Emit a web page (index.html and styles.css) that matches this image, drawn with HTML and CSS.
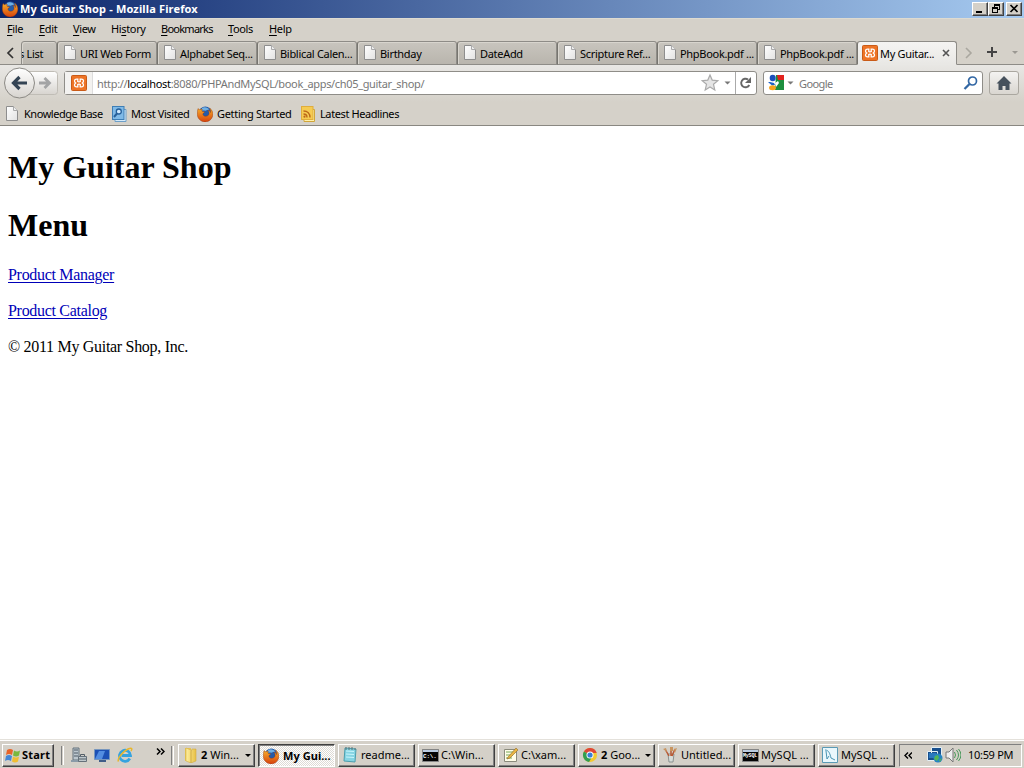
FILE: index.html
```html
<!DOCTYPE html>
<html lang="en">
<head>
<meta charset="utf-8">
<title>My Guitar Shop - Mozilla Firefox</title>
<link rel="stylesheet" href="styles.css">
</head>
<body>
<svg class="sprites" width="0" height="0" aria-hidden="true">
  <defs>
    <linearGradient id="paper" x2="1" y2="1"><stop stop-color="#fff"/><stop offset="1" stop-color="#e2e2e2"/></linearGradient>
    <linearGradient id="flame" x2="0" y2="1"><stop stop-color="#f8b12c"/><stop offset="1" stop-color="#d6420c"/></linearGradient>
    <linearGradient id="folderfill" x2="1"><stop stop-color="#fff0a0"/><stop offset="1" stop-color="#e7bf45"/></linearGradient>
  </defs>
  <symbol id="page" viewBox="0 0 16 16"><path d="M2.500.5h7l4 4v10h-11z" fill="url(#paper)" stroke="#8e8e8e"/><path d="M9.500.5v4h4" fill="#eee" stroke="#aaa"/></symbol>
  <symbol id="firefox" viewBox="0 0 16 16"><circle cx="8.300" cy="7" r="6.500" fill="#255ba8"/><path d="M5 2c2-1.500 6-1 7.500 2-1-.5-2-.5-3 .3-1 1-3-.3-4.500.7z" fill="#6fb0e4"/><path d="M1 2.500c.6.400 1 .8 1.300 1.300C3.300 3 4.500 3 5.400 3.500c-.5.500-.6 1.100-.3 1.800l2.500.5c0 1-1.600 1.300-1.800 2.200C6.300 10.500 9.500 11 11.300 9.300c1.300-1.500 1-3.500-.3-5.300 1.700.7 2.300 1.500 2.600 2.600.1-1.800-.2-3.100-1.100-4.600C15.500 4 16.300 7 15.700 9.700 14.900 13.500 11.600 16 8 15.900 3.700 15.800.4 12.500.3 8.300.2 6.200.5 4.300 1 2.500z" fill="url(#flame)" stroke="#8e310d" stroke-width=".4"/></symbol>
  <symbol id="xampp" viewBox="0 0 16 16"><rect x=".5" y=".5" width="15" height="15" rx="1" fill="#ee7426" stroke="#c95b18"/><path d="M6.800 6.300V4.200H5.500C3 4.200 3 6.800 4.700 8 3 9.200 3 11.800 5.500 11.800h1.300V9.700M9.200 6.300V4.200h1.300c2.500 0 2.500 2.600.8 3.800 1.700 1.200 1.700 3.800-.8 3.800H9.200V9.700M6.300 6.300q1.700 1.200 3.400 0M6.300 9.700q1.700-1.200 3.400 0" fill="none" stroke="#fff" stroke-width="1.300"/></symbol>
  <symbol id="visited" viewBox="0 0 16 16"><path d="M13 3.500h2v12H4v-2" fill="#d5eafa" stroke="#6d9fc8"/><rect x="1.500" y=".5" width="11.500" height="13" fill="#80bae7" stroke="#3e7eb5"/><circle cx="7.800" cy="5.500" r="2.500" fill="#cfeaff" stroke="#265f99" stroke-width="1.300"/><path d="m6 7.500-3 3.500" stroke="#265f99" stroke-width="2"/></symbol>
  <symbol id="feed" viewBox="0 0 16 16"><path d="M13 3.500h1.500v12H4v-2" fill="#fff1ad" stroke="#d2a638"/><rect x="1.500" y=".5" width="11.500" height="13" fill="#f5cb52" stroke="#e0ad3b"/><g fill="none" stroke="#bc6819" stroke-width="1.400"><path d="M3.500 5c4 0 6.500 2.500 6.500 6.500M3.500 8c2.200 0 3.500 1.300 3.500 3.500"/></g><circle cx="4.500" cy="10.700" r="1.100" fill="#bc6819"/></symbol>
  <symbol id="cmd" viewBox="0 0 17 13"><path d="M.5.5h16v12H.5z" fill="#050505" stroke="#848484"/><path d="M1 1h15v2H1z" fill="#bacbe0"/></symbol>
</svg>

<div class="window">
  <header class="titlebar">
    <svg class="i16"><use href="#firefox"/></svg><span class="title">My Guitar Shop - Mozilla Firefox</span>
    <div class="controls">
      <svg class="winbtn" viewBox="0 0 14 12"><path d="M3 8h6v2H3z"/></svg>
      <svg class="winbtn" viewBox="0 0 14 12"><path d="M5 1h6v6H9V6h1V3H6v1H5zM3 4h6v6H3zM4 6v3h4V6z" fill-rule="evenodd"/></svg>
      <svg class="winbtn close" viewBox="0 0 14 12"><path d="m3.500 2 7 7m0-7-7 7" stroke="#000" stroke-width="1.700"/></svg>
    </div>
  </header>

  <nav class="menubar"><span><u>F</u>ile</span><span><u>E</u>dit</span><span><u>V</u>iew</span><span>Hi<u>s</u>tory</span><span><u>B</u>ookmarks</span><span><u>T</u>ools</span><span><u>H</u>elp</span></nav>

  <div class="tabs">
    <svg class="scroll" viewBox="0 0 21 24"><path d="m13 7-5 5 5 5" fill="none" stroke="#333" stroke-width="1.700"/></svg>
    <div class="tab partial"><span>s List</span></div>
    <div class="tab"><svg class="i16"><use href="#page"/></svg><span>URI Web Form</span></div>
    <div class="tab"><svg class="i16"><use href="#page"/></svg><span>Alphabet Seq...</span></div>
    <div class="tab"><svg class="i16"><use href="#page"/></svg><span>Biblical Calen...</span></div>
    <div class="tab"><svg class="i16"><use href="#page"/></svg><span>Birthday</span></div>
    <div class="tab"><svg class="i16"><use href="#page"/></svg><span>DateAdd</span></div>
    <div class="tab"><svg class="i16"><use href="#page"/></svg><span>Scripture Ref...</span></div>
    <div class="tab"><svg class="i16"><use href="#page"/></svg><span>PhpBook.pdf ...</span></div>
    <div class="tab"><svg class="i16"><use href="#page"/></svg><span>PhpBook.pdf ...</span></div>
    <div class="tab active"><svg class="i16"><use href="#xampp"/></svg><span>My Guitar...</span><svg class="tabclose" viewBox="0 0 8 8"><path d="m1 1 6 6m0-6-6 6" stroke="#555" stroke-width="1.600"/></svg></div>
    <svg class="tabtools" viewBox="0 0 67 24"><g fill="none"><path d="m9 7 5 5-5 5" stroke="#aaa79f" stroke-width="1.600"/><path d="M30 11h10M35 6v10" stroke="#444" stroke-width="2"/></g><path d="M55 10h6l-3 3z" fill="#9b9892"/></svg>
  </div>

  <div class="toolbar">
    <svg class="navbuttons" viewBox="0 0 60 36">
      <defs><linearGradient id="btn" x2="0" y2="1"><stop stop-color="#fff"/><stop offset="1" stop-color="#d7d4cf"/></linearGradient></defs>
      <rect x="25.500" y="6.500" width="32" height="23" rx="3" fill="url(#btn)" stroke="#c0bdb6"/>
      <path d="M39 18h10M44.500 13l5 5-5 5" fill="none" stroke="#a3a4a5" stroke-width="2.800"/>
      <circle cx="19.500" cy="18" r="15" fill="url(#btn)" stroke="#8b8984"/>
      <path d="M14 18h13M19.500 12l-6 6 6 6" fill="none" stroke="#344454" stroke-width="3.200"/>
    </svg>
    <div class="address">
      <div class="identity"><svg class="i16"><use href="#xampp"/></svg></div>
      <div class="url">http://<b>localhost</b>:8080/PHPAndMySQL/book_apps/ch05_guitar_shop/</div>
      <svg class="addrtools" viewBox="0 0 58 22"><path d="m12 3 2.200 5.100 5.600.5-4.300 3.700 1.300 5.600-4.800-3-4.800 3 1.300-5.600-4.300-3.700 5.600-.5z" fill="#e5e5e5" stroke="#aaa" stroke-width="1.200"/><path d="M26.500 9.500h6l-3 3z" fill="#777"/><path d="M37.500 0v22" stroke="#aaa"/><path d="M50 7.500A4.300 4.300 0 1 0 51.300 13" fill="none" stroke="#666" stroke-width="1.900"/><path d="M53 5v6h-6z" fill="#666"/></svg>
    </div>
    <div class="search">
      <svg class="google" viewBox="0 0 32 22"><path d="M12 3h8v15h-9z" fill="#1d8f3f"/><path d="M13 3h7v5h-6z" fill="#e2231f"/><path d="m11 11 3-2 1 2-3 4z" fill="#fff"/><ellipse cx="8.700" cy="6" rx="3" ry="3.200" fill="#1d50bb"/><path d="M4 10h2l4 1 1 2-3 .5z" fill="#1d62c6"/><ellipse cx="8.500" cy="15.700" rx="3.500" ry="2.500" fill="#f5a41f"/><path d="M23.500 9.500h6l-3 3z" fill="#777"/></svg>
      <span>Google</span>
      <svg class="magnifier" viewBox="0 0 16 16"><circle cx="9.500" cy="6" r="4" fill="#fff" stroke="#3267a4" stroke-width="1.700"/><path d="m6.500 9-5 5" stroke="#3267a4" stroke-width="2.300"/></svg>
    </div>
    <div class="home"><svg class="i16" viewBox="0 0 16 16"><path d="M8 1 .5 8.500h2V15h4v-4h3v4h4V8.500h2z" fill="#46515c"/></svg></div>
  </div>

  <div class="bookmarks">
    <span class="knowledge"><svg class="i16"><use href="#page"/></svg>Knowledge Base</span>
    <span class="most"><svg class="i16"><use href="#visited"/></svg>Most Visited</span>
    <span class="getting"><svg class="i16"><use href="#firefox"/></svg>Getting Started</span>
    <span class="latest"><svg class="i16"><use href="#feed"/></svg>Latest Headlines</span>
  </div>

  <main>
    <h1>My Guitar Shop</h1>
    <h1>Menu</h1>
    <p><a href="#">Product Manager</a></p>
    <p><a href="#">Product Catalog</a></p>
    <p>© 2011 My Guitar Shop, Inc.</p>
  </main>

  <footer class="taskbar">
    <div class="start"><svg class="i16" viewBox="0 0 16 16"><path d="M2 3q3-2 6 0L7 8Q4 6 1 8z" fill="#e86429"/><path d="M9 3.500q3 2 6 0L14 8.500q-3 2-6 0z" fill="#79b83d"/><path d="M1 9q3-2 6 0l-1 5q-3-2-6 0z" fill="#4387d7"/><path d="M8 9.500q3 2 6 0l-1 5q-3 2-6 0z" fill="#f0bd32"/></svg><b>Start</b></div>
    <i class="grip first"></i>
    <div class="quick">
      <svg class="i16" viewBox="0 0 16 16"><path d="M2 1h6v12H2z" fill="#bcc7ce" stroke="#64727c"/><path d="M3 3h4M3 6h4M3 9h4" stroke="#4e5b66"/><path d="M0 13h8v2H0z" fill="#8a9ba8"/><path d="M7.500 9.500h8v5h-8z" fill="#bfc8cc" stroke="#65717a"/><path d="M9.500 9V7.500h4V9M8 12h7" fill="none" stroke="#535e67"/></svg>
      <svg class="i16" viewBox="0 0 16 16"><path d="M.5 2.500h15v10H.5z" fill="#1c50b5" stroke="#7796bd"/><path d="m1 12 4-8h6L8 12z" fill="#538de1"/><path d="M5 13h7v2H5z" fill="#405d88"/></svg>
      <svg class="i16" viewBox="0 0 16 16"><path d="M12.800 11.500A5.500 5.500 0 1 1 13.500 8.500H4.500" fill="none" stroke="#35a3df" stroke-width="2.800"/><path d="M1.500 14.500C0 12 5 5 11 2c3-1.500 5-1 3 2" fill="none" stroke="#e8b72c" stroke-width="1.500"/></svg>
    </div>
    <svg class="chevrons" viewBox="0 0 9 7"><path d="m1 .5 3 3-3 3M5 .5l3 3-3 3" fill="none" stroke="#000" stroke-width="1.500"/></svg>
    <i class="grip second"></i>
    <div class="tasks">
      <div class="task"><svg class="i16" viewBox="0 0 16 16"><path d="M3 1h6v13H3z" fill="#e9c652"/><path d="m4 1 5 2v13l-5-2zM10 2h4v12l-5 2V5z" fill="url(#folderfill)" stroke="#d2ac44" stroke-width=".6"/></svg><span><b>2</b> Win...</span><i class="arrow"></i></div>
      <div class="task pressed"><svg class="i16"><use href="#firefox"/></svg><b>My Gui...</b></div>
      <div class="task"><svg class="i16" viewBox="0 0 16 16"><path d="m3 1 11 1-1 13-11-1z" fill="#86d4e3" stroke="#4c9ead"/><path d="m4 4 8 .5M4 7l8 .5m-8 2.500 8 .5" stroke="#c9f5fb"/><path d="M4 0v3m3-3v3m3-3v3m3-2v2" stroke="#5d7377"/></svg><span>readme...</span></div>
      <div class="task"><div class="console"><svg><use href="#cmd"/></svg><small>C:\.</small></div><span>C:\Win...</span></div>
      <div class="task"><svg class="i16" viewBox="0 0 16 16"><path d="M2.500 2.500h12v12h-12z" fill="#fffde9" stroke="#8a8a7c"/><path d="M4 5h8M4 8h7M4 11h6" stroke="#77a95b"/><path d="m6 10 8-9 2 2-8 8-3 1z" fill="#e9b543" stroke="#8f6a29" stroke-width=".6"/></svg><span>C:\xam...</span></div>
      <div class="task"><svg class="i16" viewBox="0 0 16 16"><circle cx="8" cy="8" r="7" fill="#f4ca30"/><path d="M8 8 1.900 4.500A7 7 0 0 1 14.700 6H8z" fill="#df4637"/><path d="M8 8 1.900 4.500A7 7 0 0 0 7 15l3-5z" fill="#329e50"/><circle cx="8" cy="8" r="3.500" fill="#fff"/><circle cx="8" cy="8" r="2.600" fill="#397fd5"/></svg><span><b>2</b> Goo...</span><i class="arrow"></i></div>
      <div class="task"><svg class="i16" viewBox="0 0 16 16"><path d="M6 7h6l-1 8H7z" fill="#d8ddd9" stroke="#8b9190"/><path d="m7 9-4-7m6 7V1m1 8 3-7" stroke="#b95832" stroke-width="1.500"/><path d="m1 2 3-1 1 4zM8 0h3v4H8zM12 2l3-1-2 5z" fill="#c89561"/></svg><span>Untitled...</span></div>
      <div class="task"><div class="console mysql"><svg><use href="#cmd"/></svg><small>MySQL</small></div><span>MySQL ...</span></div>
      <div class="task"><svg class="i16" viewBox="0 0 16 16"><path d="M.5.5h15v15H.5z" fill="#e9f7fc" stroke="#5a9ab5"/><path d="M3 3c4 0 5 4 6 8l4 2M4 4l1 8 2-3" fill="none" stroke="#4893b1"/></svg><span>MySQL ...</span></div>
    </div>
    <div class="tray">
      <svg class="trayleft" viewBox="0 0 8 7"><path d="m4 .5-3 3 3 3m4-6-3 3 3 3" fill="none" stroke="#000" stroke-width="1.400"/></svg>
      <svg class="i16 network" viewBox="0 0 16 16"><path d="M4.500.5h10v9h-10zM.5 4.500h10v9H.500z" fill="#184f8d" stroke="#e5f0f5"/><path d="M2 6h7v5H2z" fill="#2b78bd"/><circle cx="11" cy="11" r="4.500" fill="#2583c2"/><path d="m8 9 3-1 1 3-2 3-3-2zM12 13l3-2-2 4z" fill="#53b557"/></svg>
      <svg class="i16" viewBox="0 0 16 16"><path d="M1 5h3l4-4v14l-4-4H1z" fill="#eee" stroke="#777"/><path d="M9.500 5q2 3 0 6m2-8q4 5 0 10m2-11q5 6 0 12" fill="none" stroke="#48985a"/></svg>
      <span>10:59 PM</span>
    </div>
  </footer>
</div>
</body>
</html>
```
FILE: styles.css
```css
* { box-sizing: border-box; }
body { margin: 0; overflow: hidden; font: 11px/14px "Noto Sans", "DejaVu Sans", sans-serif; color: #000; }
svg { display: block; flex-shrink: 0; }
.sprites { position: absolute; }
.i16 { width: 16px; height: 16px; }
.window { width: 1024px; height: 768px; display: flex; flex-direction: column; background: #fff; }
.titlebar { height: 18px; flex-shrink: 0; display: flex; align-items: center; padding: 0 2px; background: linear-gradient(90deg, #0a246a, #a6caf0); color: #fff; }
.title { margin-left: 2px; font-weight: bold; letter-spacing: .15px; white-space: nowrap; }
.controls { display: flex; margin-left: auto; }
.winbtn { width: 16px; height: 14px; background: #d4d0c8; border: 1px solid; border-color: #fff #404040 #404040 #fff; box-shadow: inset -1px -1px #808080; }
.close { margin-left: 2px; }
.menubar { height: 23px; flex-shrink: 0; display: grid; grid-template-columns: 32px 34px 38px 50px 67px 41px 40px; align-items: center; padding: 0 0 2px 7px; background: #d5d1c9; border-top: 1px solid #dedbd1; letter-spacing: -.35px; }
.menubar span:nth-child(5) { letter-spacing: -.75px; }
.menubar u { text-underline-offset: 2px; }
.tabs { height: 24px; flex-shrink: 0; display: flex; background: #d5d1c9; box-shadow: inset 0 -1px #8e8c87; }
.scroll { width: 21px; height: 24px; }
.tab { width: 100px; height: 24px; display: flex; align-items: center; gap: 2px; padding: 0 0 0 4px; border: 1px solid #8e8c87; border-left-color: #77756f; border-radius: 3px 3px 0 0; background: linear-gradient(#c8c5be, #b9b5ad); white-space: nowrap; letter-spacing: -.3px; box-shadow: inset 1px 1px #d8d5ce; }
.tab > span { padding-top: 2px; }
.partial { width: 36px; padding: 0; border-left-color: #8e8c87; overflow: hidden; }
.partial > span { margin-left: -3px; }
.active { background: linear-gradient(#f5f4f2, #e9e8e5); border-bottom-color: #e9e8e5; box-shadow: none; }
.tabclose { width: 8px; height: 8px; margin: 0 6px 0 auto; }
.tabtools { width: 67px; height: 24px; }
.toolbar { height: 37px; flex-shrink: 0; display: flex; align-items: center; padding-bottom: 1px; background: linear-gradient(#e8e7e4, #d5d1c9); }
.navbuttons { width: 60px; height: 36px; }
.address { width: 693px; height: 24px; margin-left: 4px; display: flex; align-items: center; border: 1px solid #8f8d88; border-radius: 3px; background: #fff; }
.identity { width: 28px; height: 22px; padding: 3px 6px; background: #f3f2f0; border-right: 1px solid #ddd; }
.url { flex: 1; padding: 1px 0 0 4px; color: #777; white-space: nowrap; letter-spacing: -.34px; }
.url b { color: #000; font-weight: normal; }
.addrtools { width: 58px; height: 22px; }
.search { width: 220px; height: 24px; margin-left: 6px; display: flex; align-items: center; border: 1px solid #8f8d88; border-radius: 3px; background: #fff; color: #777; }
.google { width: 32px; height: 22px; }
.search span { margin-left: 3px; padding-top: 1px; letter-spacing: -.6px; }
.magnifier { width: 16px; height: 16px; margin: 0 3px 0 auto; }
.home { width: 30px; height: 24px; margin-left: 6px; display: grid; place-items: center; border: 1px solid #aaa7a0; border-radius: 3px; background: linear-gradient(#f4f3f1, #d9d6d0); }
.bookmarks { height: 24px; flex-shrink: 0; display: grid; grid-template-columns: 106px 86px 103px 110px; padding-left: 4px; background: #d5d1c9; border-bottom: 1px solid #898781; letter-spacing: -.4px; }
.bookmarks span { display: flex; align-items: center; gap: 4px; white-space: nowrap; }
.bookmarks span.most, .bookmarks span.getting, .bookmarks span.latest { padding-left: 1px; }
.bookmarks span.getting { letter-spacing: -.3px; }
.bookmarks span.knowledge { letter-spacing: -.46px; }
main { flex: 1; padding: 0 8px; font: 16px/20px "Liberation Serif", serif; }
h1 { height: 37px; margin: 22px 0 21px; font-size: 32px; line-height: 38px; font-weight: bold; }
h1 + h1 { margin: 0 0 22px; }
p { margin: 0 0 16px; letter-spacing: -.3px; }
a { color: #0000b8; text-underline-offset: 2px; }
.taskbar { height: 28px; flex-shrink: 0; display: flex; align-items: center; background: #d4d0c8; box-shadow: 0 -1px #e4e1db, inset 0 1px #fff; padding: 2px 2px 0; }
.start, .task { height: 23px; display: flex; align-items: center; border: 1px solid; border-color: #fff #404040 #404040 #fff; box-shadow: inset -1px -1px #808080; background: #d4d0c8; white-space: nowrap; }
.start { width: 52px; padding-left: 2px; gap: 1px; letter-spacing: .2px; }
.grip { width: 3px; height: 19px; border-left: 1px solid #808080; border-right: 1px solid #fff; }
.first { margin-left: 7px; }
.quick { margin-left: 7px; display: flex; gap: 7px; }
.chevrons { width: 9px; height: 7px; margin: -7px 0 0 23px; }
.second { margin-left: 6px; }
.tasks { display: flex; gap: 3px; margin-left: 4px; }
.task { width: 77px; padding: 0 3px; gap: 3px; }
.pressed { border-color: #404040 #fff #fff #404040; box-shadow: inset 1px 1px #808080; background: repeating-conic-gradient(#fff 0 25%, #dedbd5 0 50%) 0 0 / 2px 2px; padding: 1px 3px 0 4px; gap: 4px; letter-spacing: .05px; }
.arrow { margin-left: auto; border: 3px solid transparent; border-top-color: #000; border-bottom: 0; }
.console { position: relative; width: 16px; height: 13px; }
.console svg { width: 17px; height: 13px; }
.console small { position: absolute; left: 1px; top: 4px; color: #fff; font: bold 6px/7px "Liberation Mono", monospace; letter-spacing: -.2px; }
.mysql small { font-size: 5px; }
.tray { width: 123px; height: 23px; margin-left: auto; display: flex; align-items: center; padding-left: 4px; border: 1px solid; border-color: #808080 #fff #fff #808080; white-space: nowrap; }
.trayleft { width: 8px; height: 7px; }
.network { margin: 0 2px 0 15px; }
.tray span { margin-left: 7px; letter-spacing: -.3px; }
```
